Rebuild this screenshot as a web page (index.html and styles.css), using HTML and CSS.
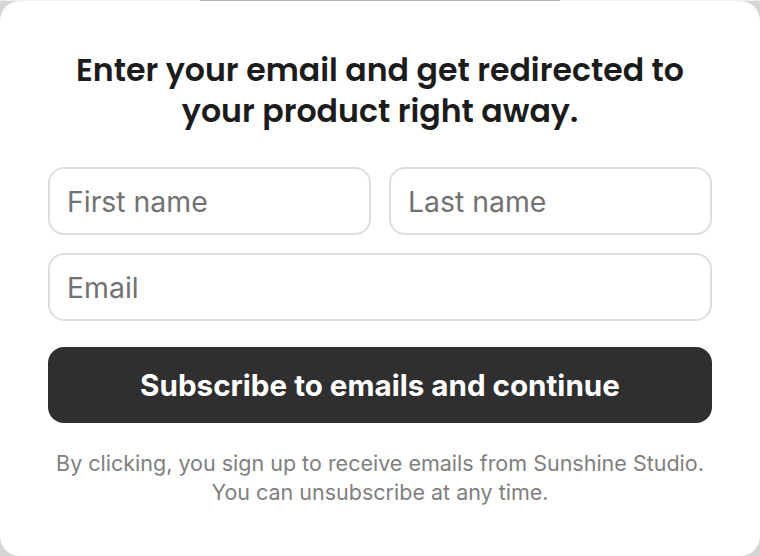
FILE: index.html
```html
<!DOCTYPE html>
<html>
<head>
<meta charset="utf-8">
<link rel="stylesheet" href="styles.css">
</head>
<body>
<div class="page">
  <div class="topstrip"><div class="handle"></div></div>
  <div class="card">
    <h1 class="title">Enter your email and get redirected to<br>your product right away.</h1>
    <form class="form">
      <div class="row">
        <input class="field" type="text" placeholder="First name">
        <input class="field" type="text" placeholder="Last name">
      </div>
      <input class="field" type="email" placeholder="Email">
      <button class="submit" type="button">Subscribe to emails and continue</button>
    </form>
    <p class="note">By clicking, you sign up to receive emails from Sunshine Studio.<br>You can unsubscribe at any time.</p>
  </div>
</div>
</body>
</html>
```
FILE: styles.css
```css
html, body {
  margin: 0;
  padding: 0;
  background: #d6d6d6;
}
.page {
  width: 760px;
  height: 556px;
  display: flex;
  flex-direction: column;
}
.topstrip {
  height: 1px;
  background: #f0f0f0;
  display: flex;
  justify-content: center;
}
.handle {
  width: 360px;
  background: #b4b4b4;
}
.card {
  flex: 1;
  background: #ffffff;
  border-radius: 20px;
  padding: 49px 48px 0;
  box-sizing: border-box;
}
.title {
  margin: 0;
  font-family: "Poppins", "Inter", sans-serif;
  font-weight: 600;
  font-size: 31.6px;
  line-height: 41px;
  color: #1c1c1c;
  text-align: center;
}
.form {
  margin-top: 35px;
  display: flex;
  flex-direction: column;
  gap: 18px;
}
.row {
  display: flex;
  gap: 18px;
}
.row .field {
  flex: 1;
  min-width: 0;
}
.field {
  height: 68px;
  box-sizing: border-box;
  border: 2px solid #dedede;
  border-radius: 16px;
  padding: 0 17px;
  font-family: "Inter", sans-serif;
  font-size: 28.4px;
  color: #222;
  background: #fff;
  outline: none;
}
.field::placeholder {
  color: #727272;
}
.submit {
  margin-top: 8px;
  height: 76px;
  border: none;
  border-radius: 16px;
  background: #2f2f2f;
  color: #ffffff;
  font-family: "Inter", sans-serif;
  font-weight: 700;
  font-size: 29.6px;
  cursor: pointer;
}
.note {
  margin: 26px 0 0;
  font-family: "Inter", sans-serif;
  font-size: 21.5px;
  line-height: 29px;
  color: #808080;
  text-align: center;
}
```
